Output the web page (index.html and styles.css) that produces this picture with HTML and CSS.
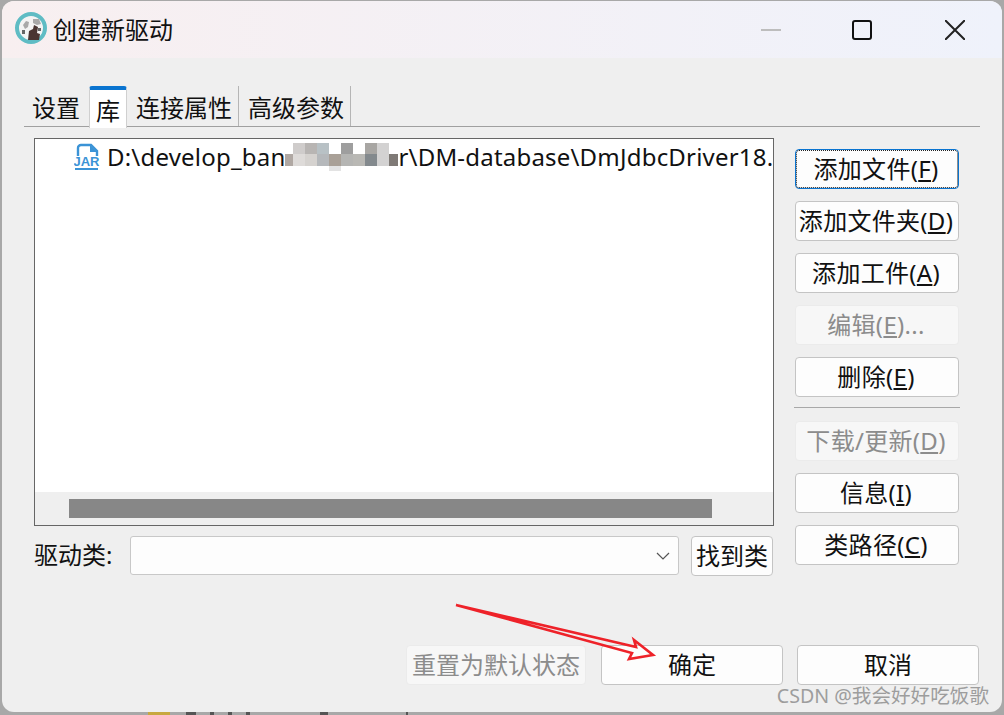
FILE: index.html
```html
<!DOCTYPE html>
<html lang="en">

<head>
    <title>创建新驱动</title>
    <meta charset="UTF-8">
    <meta name="viewport" content="width=device-width, initial-scale=1">
    <link rel="stylesheet" href="styles.css">
</head>

<body>
    <div class="window">
        <div class="titlebar">
            <svg class="app-icon" width="36" height="36" viewBox="0 0 36 36">
                <circle cx="18" cy="18" r="14" fill="#f4f4f4" stroke="#5fbcc4" stroke-width="4"/>
                <path d="M10 15l3-4 3 1-1 5-3 2zM20 9h6l2 5-4 1-4-2z" fill="#a9a9a9"/>
                <path d="M9 20h3v4H9zM25 18h3v3h-3z" fill="#666"/>
                <path d="M15 30l1-9 4-2 1-4 4 2-1 6 3 1-1 6z" fill="#4a3532"/>
            </svg>
            <span class="title">创建新驱动</span>
            <div class="win-btns">
                <svg class="min-icon" width="20" height="20" viewBox="0 0 20 20"><path d="M0 10h20" stroke="#bdbdbd" stroke-width="2"/></svg>
                <svg width="20" height="20" viewBox="0 0 20 20"><rect x="1" y="1" width="18" height="18" rx="2" fill="none" stroke="#111" stroke-width="2"/></svg>
                <svg width="20" height="20" viewBox="0 0 20 20"><path d="M0 0l20 20M20 0L0 20" stroke="#222" stroke-width="2"/></svg>
            </div>
        </div>

        <div class="content">
            <div class="tabs">
                <div class="tab first">设置</div>
                <div class="tab active">库</div>
                <div class="tab">连接属性</div>
                <div class="tab">高级参数</div>
            </div>

            <div class="main">
                <div class="left">
                    <div class="listbox">
                        <div class="list-area">
                            <div class="list-row">
                                <svg class="jar-icon" width="26" height="28" viewBox="0 0 26 28">
                                    <path d="M4 13V5a3 3 0 0 1 3-3h10l6 6v5" fill="none" stroke="#3b93d6" stroke-width="2.4"/>
                                    <path d="M16 2v7h7z" fill="#3b93d6"/>
                                    <text x="12.5" y="23" class="jar-text">JAR</text>
                                    <path d="M1 26h23" stroke="#3b93d6" stroke-width="2"/>
                                </svg>
                                <div class="path-text">D:\develop_ban<svg class="mosaic" width="113" height="30" viewBox="0 0 113 30">
                                        <rect x="8" y="0" width="12" height="11" fill="#cfcccb"/>
                                        <rect x="20" y="0" width="12" height="11" fill="#b8b5b3"/>
                                        <rect x="32" y="0" width="12" height="11" fill="#b8c1c5"/>
                                        <rect x="56" y="0" width="12" height="11" fill="#9e9e9e"/>
                                        <rect x="80" y="0" width="12" height="11" fill="#a8a6a3"/>
                                        <rect x="92" y="0" width="12" height="11" fill="#d3d2d2"/>
                                        <rect x="0" y="11" width="8" height="12" fill="#b0a8a3"/>
                                        <rect x="8" y="11" width="12" height="12" fill="#dedbd9"/>
                                        <rect x="20" y="11" width="12" height="12" fill="#d5d2cf"/>
                                        <rect x="32" y="11" width="12" height="12" fill="#b5b8bb"/>
                                        <rect x="44" y="11" width="12" height="12" fill="#a9a097"/>
                                        <rect x="56" y="11" width="12" height="12" fill="#b5b5b3"/>
                                        <rect x="68" y="11" width="12" height="12" fill="#b9b8b4"/>
                                        <rect x="80" y="11" width="12" height="12" fill="#83898d"/>
                                        <rect x="92" y="11" width="12" height="12" fill="#d3d2d2"/>
                                        <rect x="104" y="11" width="9" height="12" fill="#7f7a76"/>
                                        <rect x="44" y="23" width="12" height="5" fill="#e3e3e3"/>
                                    </svg>r\DM-database\DmJdbcDriver18.</div>
                            </div>
                        </div>
                        <div class="hscroll">
                            <div class="hthumb"></div>
                        </div>
                    </div>
                    <div class="driver-row">
                        <label class="driver-label">驱动类:</label>
                        <div class="combo">
                            <svg width="14" height="8" viewBox="0 0 14 8"><path d="M1 1l6 6 6-6" fill="none" stroke="#555" stroke-width="1.2"/></svg>
                        </div>
                        <button class="btn find-btn">找到类</button>
                    </div>
                </div>

                <div class="side">
                    <button class="btn side-btn focused">添加文件(<u>F</u>)</button>
                    <button class="btn side-btn">添加文件夹(<u>D</u>)</button>
                    <button class="btn side-btn">添加工件(<u>A</u>)</button>
                    <button class="btn side-btn disabled">编辑(<u>E</u>)...</button>
                    <button class="btn side-btn">删除(<u>E</u>)</button>
                    <div class="side-sep"></div>
                    <button class="btn side-btn disabled">下载/更新(<u>D</u>)</button>
                    <button class="btn side-btn">信息(<u>I</u>)</button>
                    <button class="btn side-btn">类路径(<u>C</u>)</button>
                </div>
            </div>

            <div class="footer">
                <button class="btn reset-btn disabled">重置为默认状态</button>
                <button class="btn footer-btn">确定</button>
                <button class="btn footer-btn">取消</button>
            </div>
        </div>
    </div>
    <!-- 窗口后面露出的一点点内容 -->
    <div class="behind"></div>

    <!-- 标注箭头 -->
    <svg class="arrow" width="1004" height="715" viewBox="0 0 1004 715">
        <path d="M456 605L636 647L634 640L653 655L629 659L632 653Z" fill="none" stroke="#ee2229" stroke-width="2.6" stroke-linejoin="miter"/>
    </svg>
    <div class="watermark">CSDN @我会好好吃饭歌</div>
</body>

</html>
```

FILE: styles.css
```css
* {
    margin: 0;
    padding: 0;
    box-sizing: border-box;
}

html,
body {
    width: 1004px;
    height: 715px;
    overflow: hidden;
}

body {
    background: #a8a8a8;
    font-family: "Noto Sans", "Noto Sans CJK SC", sans-serif;
    font-size: 24px;
    color: #111;
    padding: 1px 2px 0 2px;
    position: relative;
}

.window {
    height: 711px;
    background: #efefef;
    border-radius: 12px;
    overflow: hidden;
    display: flex;
    flex-direction: column;
}

.behind {
    height: 3px;
    margin: 0 -2px;
    background: linear-gradient(to right,
        #a8a8a8 0 148px, #c8a840 148px 170px, #a8a8a8 170px 186px,
        #555 186px 196px, #a8a8a8 196px 210px, #555 210px 214px,
        #a8a8a8 214px 228px, #555 228px 232px, #a8a8a8 232px 246px,
        #555 246px 250px, #a8a8a8 250px 320px, #555 320px 328px,
        #a8a8a8 328px 406px, #555 406px 408px, #a8a8a8 408px);
}

.titlebar {
    height: 57px;
    flex: none;
    display: flex;
    align-items: center;
    background: linear-gradient(to right, #f8eff0, #eff2fb);
    padding: 0 37px 0 11px;
}

.app-icon {
    flex: none;
    margin-top: -3px;
}

.title {
    margin-left: 4px;
    line-height: 1;
}

.win-btns {
    margin-left: auto;
    display: flex;
    gap: 73px;
}

.min-icon {
    margin-right: -2px;
}

.content {
    flex: 1;
    padding: 28px 22px 0 22px;
    display: flex;
    flex-direction: column;
}

.tabs {
    height: 41px;
    display: flex;
    border-bottom: 1px solid #a0a0a0;
}

.tab {
    height: 40px;
    padding: 5px 6px 0 9px;
    line-height: 34px;
    white-space: nowrap;
    border-right: 1px solid #b5b5b5;
}

.tab.first {
    padding: 5px 8px 0 8px;
    border-right: none;
    width: 65px;
}

.tab.active {
    height: 42px;
    width: 38px;
    padding: 5px 0 0 6px;
    background: #fff;
    border: 1px solid #d0d0d0;
    border-top: 4px solid #0a74d0;
    border-bottom: none;
    border-radius: 3px 3px 0 0;
    line-height: 32px;
}

.main {
    display: flex;
    padding: 11px 0 0 10px;
}

.left {
    width: 740px;
    flex: none;
}

.listbox {
    height: 388px;
    border: 1px solid #666;
    display: flex;
    flex-direction: column;
    background: #fff;
}

.list-area {
    flex: 1;
    overflow: hidden;
    padding: 3px 0 0 39px;
}

.list-row {
    display: flex;
    align-items: center;
    height: 30px;
}

.jar-icon {
    flex: none;
}

.jar-text {
    font-family: "Liberation Sans", sans-serif;
    font-size: 13px;
    font-weight: 700;
    fill: #3b93d6;
    text-anchor: middle;
}

.path-text {
    margin-left: 7px;
    white-space: nowrap;
    line-height: 30px;
    letter-spacing: 0.2px;
}

/* 打码的小方块 */
.mosaic {
    vertical-align: top;
    margin-top: 1px;
}

.hscroll {
    height: 33px;
    flex: none;
    background: #efefef;
    padding: 7px 61px 0 34px;
}

.hthumb {
    height: 19px;
    background: #878787;
}

.driver-row {
    display: flex;
    align-items: flex-start;
    margin-top: 10px;
}

.driver-label {
    width: 96px;
    line-height: 38px;
}

.combo {
    width: 549px;
    height: 39px;
    background: #fdfdfd;
    border: 1px solid #c8c8c8;
    border-radius: 3px;
    display: flex;
    align-items: center;
    justify-content: flex-end;
    padding-right: 8px;
}

.btn {
    font-family: "Noto Sans", "Noto Sans CJK SC", sans-serif;
    font-size: 24px;
    color: #111;
    background: #fdfdfd;
    border: 1px solid #c4c4c4;
    border-radius: 4px;
    height: 40px;
    white-space: nowrap;
    line-height: 1;
}

.btn.disabled {
    background: #f7f7f7;
    border-color: #ebebeb;
    color: #8c8c8c;
}

.find-btn {
    width: 82px;
    margin-left: 12px;
}

.side {
    width: 164px;
    margin-left: 21px;
    padding-top: 11px;
    display: flex;
    flex-direction: column;
    gap: 12px;
}

.side-btn {
    width: 164px;
    flex: none;
    letter-spacing: 0.3px;
    padding-right: 2px;
}

.side-btn.focused {
    border: 1px solid #0a74d0;
    outline: 1px dotted #222;
    outline-offset: -2px;
}

.side-sep {
    height: 1px;
    background: #a8a8a8;
    margin: -2px 0 1px -1px;
    width: 166px;
}

.footer {
    margin-top: 69px;
    display: flex;
    padding-left: 382px;
}

.reset-btn {
    width: 180px;
    flex: none;
}

.footer-btn {
    width: 182px;
    flex: none;
    margin-left: 15px;
}

.footer-btn + .footer-btn {
    margin-left: 14px;
}

.arrow {
    position: absolute;
    left: 0;
    top: 0;
    pointer-events: none;
}

.watermark {
    position: absolute;
    right: 15px;
    top: 684px;
    font-size: 19.6px;
    line-height: 24px;
    color: #9d9d9d;
    white-space: nowrap;
}
```
